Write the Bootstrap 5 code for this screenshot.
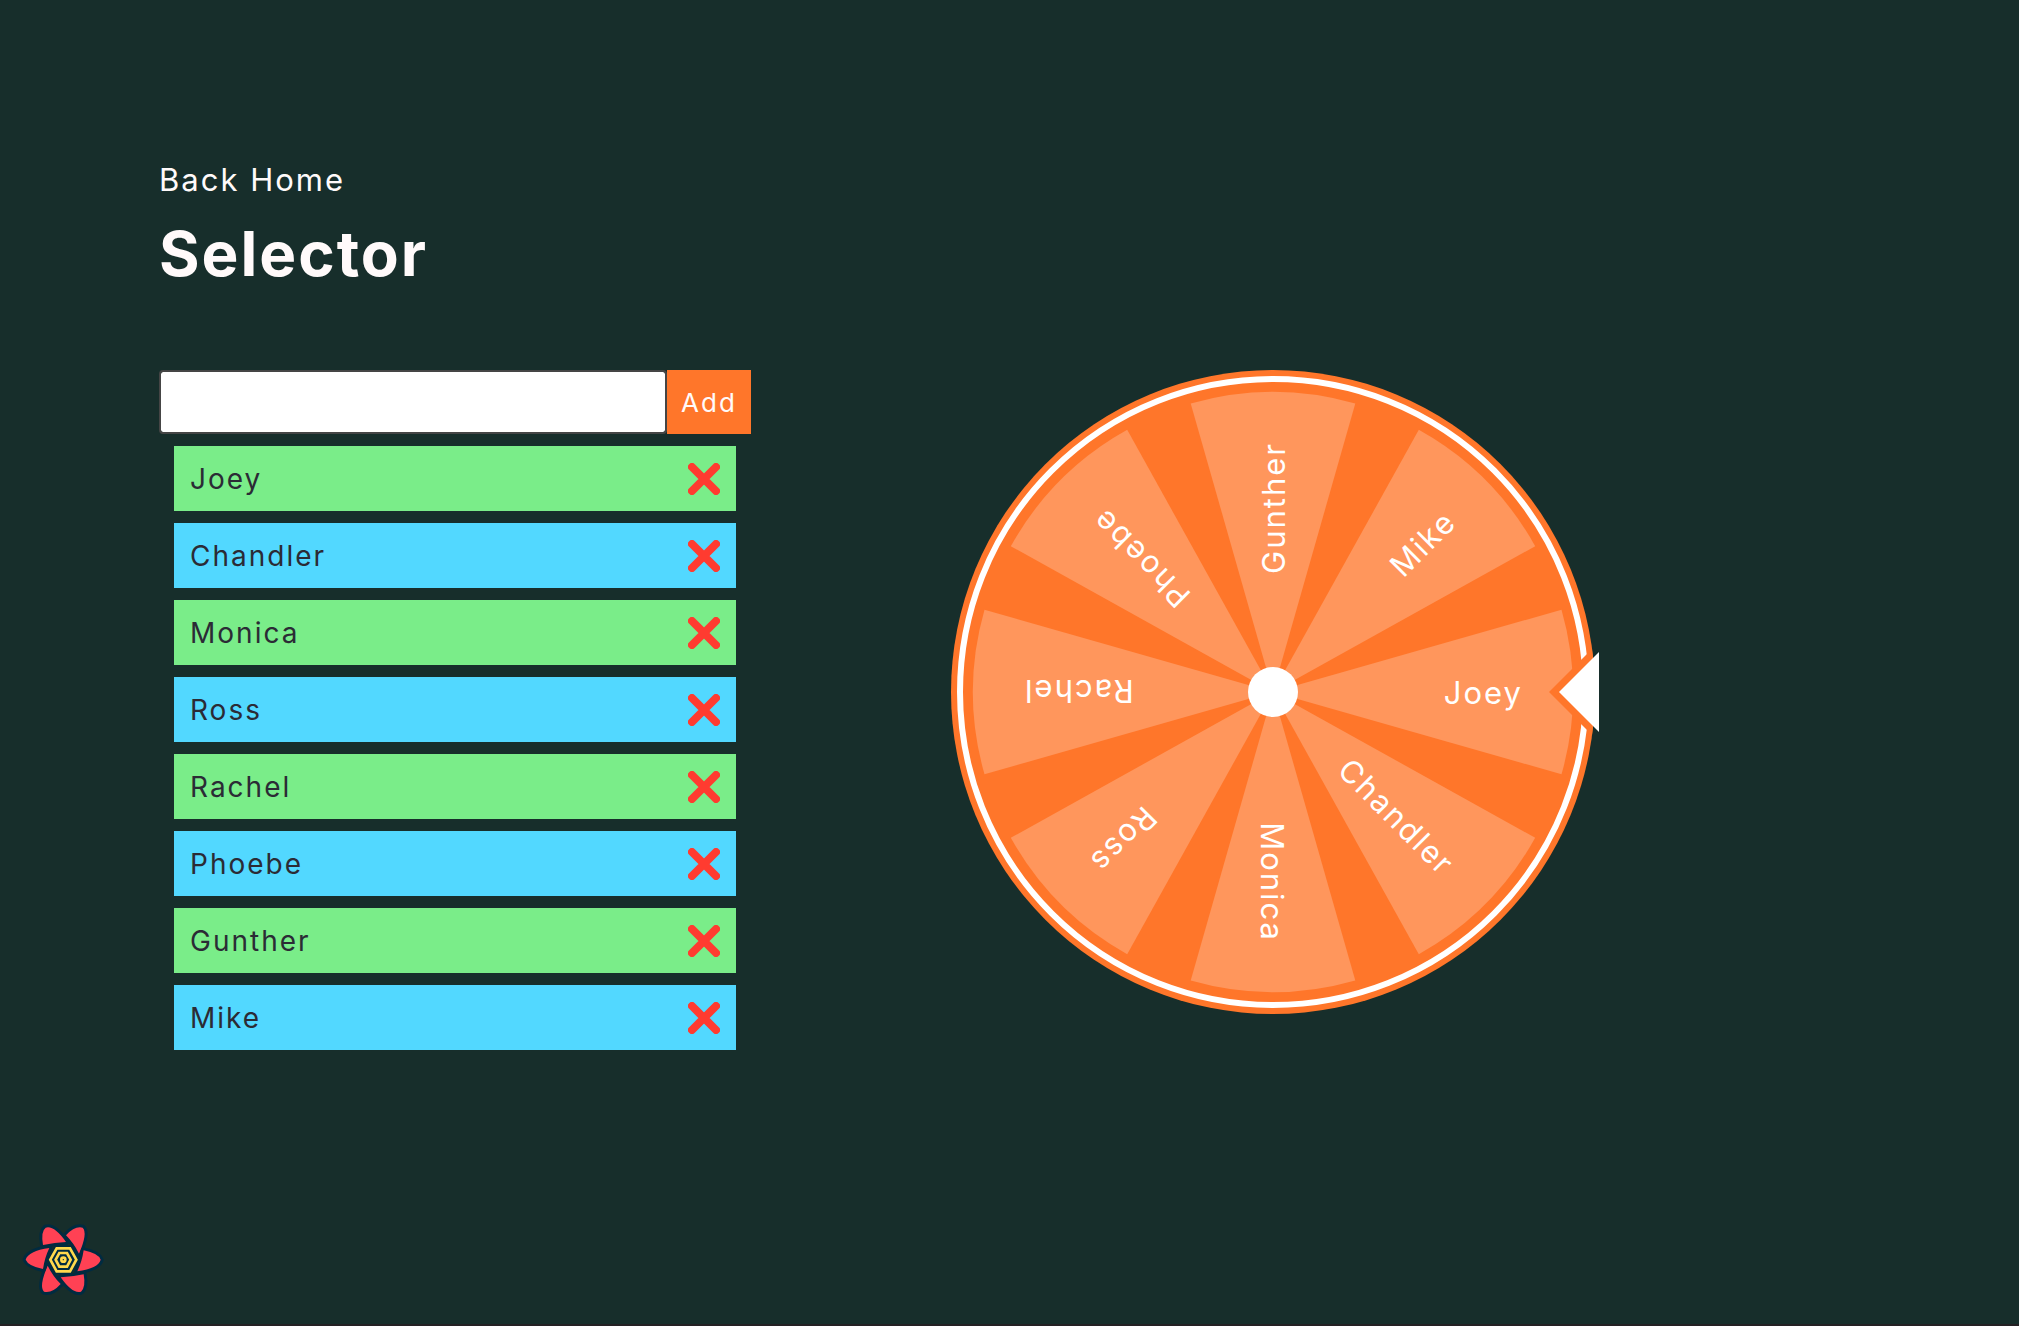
<!DOCTYPE html>
<html lang="en">
<head>
<meta charset="utf-8">
<meta name="viewport" content="width=device-width, initial-scale=1">
<title>Selector</title>
<link href="https://cdn.jsdelivr.net/npm/bootstrap@5.3.0/dist/css/bootstrap.min.css" rel="stylesheet">
<style>
  body { background: #242124; font-family: Inter, "Liberation Sans", sans-serif; letter-spacing: 2px; }
  .selector-page { background: #172e2b; color: #fffafa; min-height: calc(100vh - 2px); padding: 150px 159px 64px; }
  .home-link { color: inherit; font-size: 31px; line-height: 60px; }
  .page-title { font-size: 62px; line-height: 88px; margin-bottom: 72px; }
  .selector-layout { gap: 48px 200px; }
  .names-panel { flex: 0 1 592px; min-width: 0; }
  .name-input { height: 64px; border: 2px solid #454545; border-radius: 4px; font-size: 28px; }
  .add-button { --bs-btn-color: #fffafa; --bs-btn-bg: #ff762a; --bs-btn-hover-bg: #ff965c; --bs-btn-hover-color: #fff; width: 84px; height: 64px; padding: 0; border: 0; border-radius: 0; font-size: 26px; letter-spacing: 2px; }
  .names-list { padding: 12px 15px 0; gap: 12px; }
  .name-row { height: 65px; padding: 0 16px; color: #2b2b35; font-size: 28px; background: #52d8ff; }
  .name-row:nth-child(odd) { background: #7aed89; }
  .remove-button { width: 32px; height: 32px; }
  .wheel-panel { flex: 0 1 648px; min-width: 0; }
  .wheel-panel text { fill: #fff; font-size: 31px; text-anchor: end; letter-spacing: 2px; }
  .devtools-button { left: 15px; bottom: 21px; }
</style>
<script src="https://cdn.jsdelivr.net/npm/bootstrap@5.3.0/dist/js/bootstrap.bundle.min.js"></script>
</head>
<body>
<svg class="d-none" aria-hidden="true">
  <symbol id="cross" viewBox="0 0 32 32"><path d="M4 4 28 28M28 4 4 28" stroke="#ff3b30" stroke-width="8" stroke-linecap="round"/></symbol>
</svg>
<main class="selector-page">
  <a class="home-link d-inline-block text-decoration-none" href="#">Back Home</a>
  <h1 class="page-title fw-bold">Selector</h1>
  <div class="selector-layout d-flex flex-wrap flex-lg-nowrap align-items-start">
    <section class="names-panel">
      <form class="d-flex">
        <input class="name-input form-control" id="new-name" type="text" aria-label="Name">
        <button class="add-button btn flex-shrink-0" type="button">Add</button>
      </form>
      <ul class="names-list list-unstyled d-flex flex-column mb-0">
        <li class="name-row d-flex align-items-center justify-content-between"><span>Joey</span><button class="remove-button btn p-0 border-0 d-flex" type="button" aria-label="Remove Joey"><svg width="32" height="32"><use href="#cross"/></svg></button></li>
        <li class="name-row d-flex align-items-center justify-content-between"><span>Chandler</span><button class="remove-button btn p-0 border-0 d-flex" type="button" aria-label="Remove Chandler"><svg width="32" height="32"><use href="#cross"/></svg></button></li>
        <li class="name-row d-flex align-items-center justify-content-between"><span>Monica</span><button class="remove-button btn p-0 border-0 d-flex" type="button" aria-label="Remove Monica"><svg width="32" height="32"><use href="#cross"/></svg></button></li>
        <li class="name-row d-flex align-items-center justify-content-between"><span>Ross</span><button class="remove-button btn p-0 border-0 d-flex" type="button" aria-label="Remove Ross"><svg width="32" height="32"><use href="#cross"/></svg></button></li>
        <li class="name-row d-flex align-items-center justify-content-between"><span>Rachel</span><button class="remove-button btn p-0 border-0 d-flex" type="button" aria-label="Remove Rachel"><svg width="32" height="32"><use href="#cross"/></svg></button></li>
        <li class="name-row d-flex align-items-center justify-content-between"><span>Phoebe</span><button class="remove-button btn p-0 border-0 d-flex" type="button" aria-label="Remove Phoebe"><svg width="32" height="32"><use href="#cross"/></svg></button></li>
        <li class="name-row d-flex align-items-center justify-content-between"><span>Gunther</span><button class="remove-button btn p-0 border-0 d-flex" type="button" aria-label="Remove Gunther"><svg width="32" height="32"><use href="#cross"/></svg></button></li>
        <li class="name-row d-flex align-items-center justify-content-between"><span>Mike</span><button class="remove-button btn p-0 border-0 d-flex" type="button" aria-label="Remove Mike"><svg width="32" height="32"><use href="#cross"/></svg></button></li>
      </ul>
    </section>
    <section class="wheel-panel" aria-label="Name wheel">
      <svg class="d-block w-100" viewBox="-322 -322 648 644">
        <defs>
          <path id="slice" d="M0 0 288.5-82.3A300 300 0 0 1 288.5 82.3Z" fill="#ff965c"/>
          <clipPath id="rim"><circle r="322"/></clipPath>
        </defs>
        <circle r="322" fill="#ff762a"/>
        <circle r="313" fill="none" stroke="#fff" stroke-width="6"/>
        <g><use href="#slice"/><text x="250" y="12">Joey</text></g>
        <g transform="rotate(45)"><use href="#slice"/><text x="250" y="12">Chandler</text></g>
        <g transform="rotate(90)"><use href="#slice"/><text x="250" y="12">Monica</text></g>
        <g transform="rotate(135)"><use href="#slice"/><text x="250" y="12">Ross</text></g>
        <g transform="rotate(180)"><use href="#slice"/><text x="250" y="12">Rachel</text></g>
        <g transform="rotate(225)"><use href="#slice"/><text x="250" y="12">Phoebe</text></g>
        <g transform="rotate(270)"><use href="#slice"/><text x="250" y="12">Gunther</text></g>
        <g transform="rotate(315)"><use href="#slice"/><text x="250" y="12">Mike</text></g>
        <circle r="25" fill="#fff"/>
        <path d="M276 0 326-50V50Z" fill="#ff762a" clip-path="url(#rim)"/>
        <path d="M286 0 326-40V40Z" fill="#fff"/>
      </svg>
    </section>
  </div>
</main>
<button class="devtools-button btn p-0 border-0 position-fixed d-flex" type="button" aria-label="Open React Query Devtools">
  <svg width="95" height="90" viewBox="0 0 285 270">
    <g fill="#ff4154" stroke="#002b41" stroke-width="18" stroke-linejoin="round" paint-order="stroke">
      <path d="M84 90Q77 49 92 38Q117 30 153 81Q120 82 84 90Z"/>
      <path d="M153 61Q179 32 203 38Q219 54 192 116Q176 84 153 61Z"/>
      <path d="M206 106Q250 115 257 134Q250 160 187 169Q201 140 206 106Z"/>
      <path d="M206 178Q213 217 198 230Q173 238 137 187Q170 186 206 178Z"/>
      <path d="M137 207Q111 236 87 230Q71 214 98 152Q114 184 137 207Z"/>
      <path d="M84 162Q40 153 32 134Q40 108 103 99Q89 128 84 162Z"/>
    </g>
    <path d="M97 134 121 91H169L193 134 169 177H121Z" fill="#002b41"/>
    <g fill="none" stroke="#ffd94c" stroke-width="8">
      <path d="M106 134 125 100H165L184 134 165 169H125Z"/>
      <path d="M122 134 133 114H156L167 134 156 155H133Z"/>
      <circle cx="145" cy="134" r="6"/>
    </g>
  </svg>
</button>
</body>
</html>
